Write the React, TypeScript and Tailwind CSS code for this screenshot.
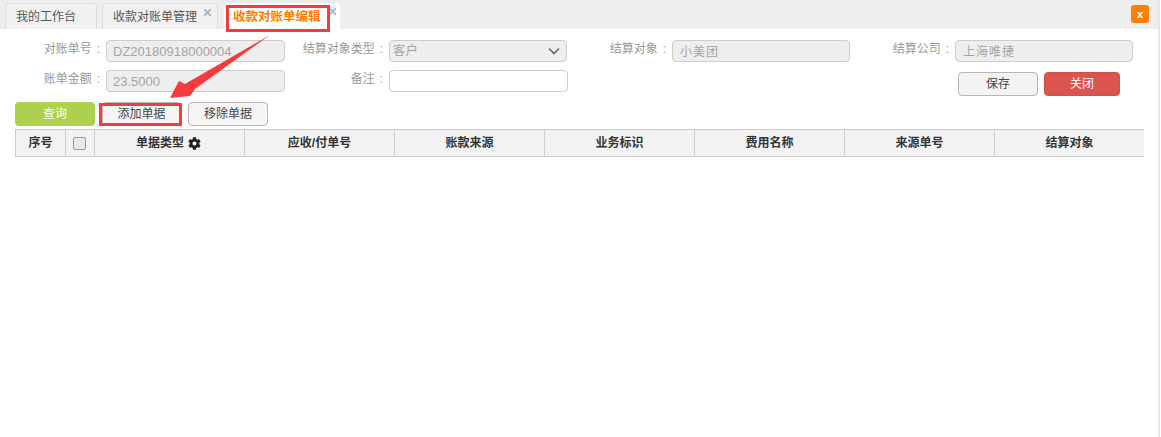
import { FaCog } from "react-icons/fa";
import { X } from "lucide-react";

const FONT = "font-['Liberation_Sans','Noto_Sans_CJK_SC',sans-serif]";

const columns = ["应收/付单号", "账款来源", "业务标识", "费用名称", "来源单号", "结算对象"];

const Label = ({ text, className }: { text: string; className: string }) => (
  <span className={`text-[12px] leading-[18px] text-[#999] text-right shrink-0 whitespace-nowrap ${className}`}>
    {text}
    <span className="ml-[5px]">:</span>
  </span>
);

const Field = ({ value, className }: { value: string; className: string }) => (
  <div className={`h-[22px] rounded-[4px] border border-[#ccc] bg-[#eee] text-[#a4a4a4] pl-[6px] leading-[22px] overflow-hidden ${className}`}>
    {value}
  </div>
);

export default function App() {
  return (
    <div className={`${FONT} relative w-[1160px] h-[437px] overflow-hidden bg-white border-r-[2px] border-[#e6e6ee]`}>
      {/* Tabs */}
      <div className="h-[29px] bg-[#eeeeee] flex items-end pl-[5px] relative">
        <div className="w-[92px] h-[26px] rounded-t-[4px] border border-b-0 border-[#ddd] bg-[#f1f1f1] text-[12px] text-[#555] leading-[26px] pl-[10px]">
          我的工作台
        </div>
        <div className="ml-[5px] w-[116px] h-[26px] rounded-t-[4px] border border-b-0 border-[#ddd] bg-[#f1f1f1] text-[12px] text-[#555] leading-[26px] pl-[10px] relative">
          收款对账单管理
          <X size={11} strokeWidth={4} className="absolute right-[4px] top-[3px] text-[#a9b8c8]" />
        </div>
        <div className="ml-[6px] w-[116px] h-[26px] rounded-t-[4px] bg-white text-[12.5px] font-bold text-[#ff7a00] leading-[28px] pl-[9px] relative">
          收款对账单编辑
          <X size={11} strokeWidth={4} className="absolute right-[2px] top-[3px] text-[#a9b8c8]" />
        </div>
        <button className="absolute right-[9px] top-[5px] w-[18px] h-[18px] rounded-[3px] bg-[#ff7f00] text-white text-[11px] font-bold leading-[16px] text-center">
          x
        </button>
      </div>

      {/* Form */}
      <div className="pt-[11px]">
        <div className="flex items-start h-[22px]">
          <Label text="对账单号" className="w-[100px] mr-[6px]" />
          <Field value="DZ20180918000004" className="w-[179px] text-[13px]" />
          <Label text="结算对象类型" className="w-[98px] mr-[6px]" />
          <div className="w-[178px] h-[22px] rounded-[4px] border border-[#ccc] bg-[#eee] text-[#a4a4a4] pl-[3px] pr-[6px] text-[12.5px] leading-[20px] flex items-center justify-between">
            客户
            <svg width="12" height="8" viewBox="0 0 12 8" fill="none" stroke="#5f6b75" strokeWidth="1.7">
              <path d="M1 1.5 6 6.5 11 1.5" />
            </svg>
          </div>
          <Label text="结算对象" className="w-[99px] mr-[6px]" />
          <Field value="小美团" className="w-[178px] text-[12px] tracking-[1px] !pl-[7px]" />
          <Label text="结算公司" className="w-[99px] mr-[6px]" />
          <Field value="上海唯捷" className="w-[178px] text-[12px] tracking-[1px] !pl-[7px]" />
        </div>
        <div className="flex items-start h-[26px] mt-[8px]">
          <Label text="账单金额" className="w-[100px] mr-[6px]" />
          <Field value="23.5000" className="w-[179px] text-[13px]" />
          <Label text="备注" className="w-[98px] mr-[6px]" />
          <div className="w-[179px] h-[22px] rounded-[4px] border border-[#ccc] bg-white" />
          <button className="ml-[390px] mt-[2px] w-[80px] h-[24px] rounded-[4px] border border-[#bdb3b5] bg-[#f3f3f3] text-[12px] text-[#444]">
            保存
          </button>
          <button className="ml-[6px] mt-[2px] w-[76px] h-[24px] rounded-[4px] border border-[#d0504a] bg-[#db5550] text-[12px] text-white">
            关闭
          </button>
        </div>
      </div>

      {/* Toolbar */}
      <div className="flex mt-[6px] pl-[15px] h-[24px]">
        <button className="w-[80px] rounded-[4px] bg-[#add04f] text-white text-[12px]">查询</button>
        <button className="ml-[7px] w-[79px] rounded-[4px] border border-[#bdb3b5] bg-[#f5f5f5] text-[12px] text-[#444]">添加单据</button>
        <button className="ml-[7px] w-[80px] rounded-[4px] border border-[#bdb3b5] bg-[#f5f5f5] text-[12px] text-[#444]">移除单据</button>
      </div>

      {/* Table header */}
      <div className="ml-[15px] mt-[3px] w-[1129px] h-[28px] flex bg-[#f2f2f2] border-y border-[#ccc] text-[12px] font-bold text-[#333] leading-[26px] text-center">
        <div className="w-[50px] border-l border-[#ccc]">序号</div>
        <div className="w-[29px] border-l border-[#ccc] flex items-center justify-center pr-[2px]">
          <span className="w-[13px] h-[13px] rounded-[2px] border border-[#999] bg-[#e8e8e8]" />
        </div>
        <div className="w-[150px] border-l border-[#ccc] flex items-center justify-center gap-[4px] pr-[2px]">
          单据类型
          <FaCog size={13} className="text-[#222]" />
        </div>
        {columns.map((title) => (
          <div key={title} className="w-[150px] border-l border-[#ccc]">{title}</div>
        ))}
      </div>

      {/* Red annotations */}
      <div className="absolute left-[226px] top-[5px] w-[104px] h-[27px] border-[3px] border-[#f33c3c]" />
      <div className="absolute left-[99px] top-[103px] w-[83px] h-[23px] border-[3px] border-[#f33c3c]" />
      <svg className="absolute left-0 top-0 pointer-events-none" width="1161" height="437">
        <path d="M270 35 L185 84 L179 81 L170 98 L190 96 L195 89 Z" fill="#f33c3c" />
      </svg>
    </div>
  );
}
